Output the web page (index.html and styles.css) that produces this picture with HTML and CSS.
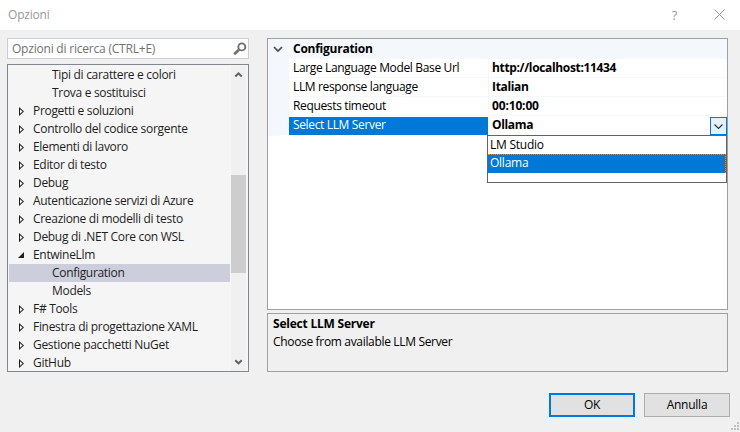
FILE: index.html
```
<!DOCTYPE html>
<html lang="it">
<head>
<meta charset="utf-8">
<title>Opzioni</title>
<link rel="stylesheet" href="styles.css">
</head>
<body>
<header class="titlebar">
  <span class="title">Opzioni</span>
  <span class="help">?</span>
  <svg class="close" width="11" height="11" viewBox="0 0 11 11"><path d="M.5.5l10 10M10.5.5l-10 10"/></svg>
</header>
<main class="content">
  <section class="left">
    <div class="search"><span>Opzioni di ricerca (CTRL+E)</span>
      <svg width="14" height="14" viewBox="0 0 14 14"><circle cx="8.8" cy="4.9" r="3.5"/><path class="handle" d="M6 7.7L1.2 12.3"/></svg>
    </div>
    <div class="tree">
      <ul class="nodes">
        <li class="child">Tipi di carattere e colori</li>
        <li class="child">Trova e sostituisci</li>
        <li class="closed">Progetti e soluzioni</li>
        <li class="closed">Controllo del codice sorgente</li>
        <li class="closed">Elementi di lavoro</li>
        <li class="closed">Editor di testo</li>
        <li class="closed">Debug</li>
        <li class="closed">Autenticazione servizi di Azure</li>
        <li class="closed">Creazione di modelli di testo</li>
        <li class="closed">Debug di .NET Core con WSL</li>
        <li class="open">EntwineLlm</li>
        <li class="child selected">Configuration</li>
        <li class="child">Models</li>
        <li class="closed">F# Tools</li>
        <li class="closed">Finestra di progettazione XAML</li>
        <li class="closed">Gestione pacchetti NuGet</li>
        <li class="closed">GitHub</li>
      </ul>
      <div class="scrollbar">
        <svg width="15" height="17" viewBox="0 0 15 17"><path d="M4.3 10.5l3.2-3.2 3.2 3.2"/></svg>
        <div class="track"><div class="thumb"></div></div>
        <svg width="15" height="17" viewBox="0 0 15 17"><path d="M4.3 6.2l3.2 3.2 3.2-3.2"/></svg>
      </div>
    </div>
  </section>
  <section class="right">
    <div class="grid">
      <div class="category"><svg width="21" height="20" viewBox="0 0 21 20"><path d="M6 8l4 4 4-4"/></svg><b>Configuration</b></div>
      <div class="row"><span class="name">Large Language Model Base Url</span><b class="value">http://localhost:11434</b></div>
      <div class="row"><span class="name">LLM response language</span><b class="value">Italian</b></div>
      <div class="row"><span class="name">Requests timeout</span><b class="value time">00:10:00</b></div>
      <div class="row active"><span class="name">Select LLM Server</span><b class="value">Ollama</b>
        <span class="drop"><svg width="15" height="16" viewBox="0 0 15 16"><path d="M3.5 6.5l4 4 4-4"/></svg></span>
      </div>
      <div class="menu"><div class="option">LM Studio</div><div class="option chosen">Ollama</div></div>
    </div>
    <div class="description"><b>Select LLM Server</b><span>Choose from available LLM Server</span></div>
  </section>
</main>
<footer class="actions">
  <button class="default">OK</button><button class="cancel">Annulla</button>
</footer>
<svg class="grip" width="8" height="8" viewBox="0 0 8 8"><path d="M6 0h2v2H6zM3 3h2v2H3zM6 3h2v2H6zM0 6h2v2H0zM3 6h2v2H3zM6 6h2v2H6z"/></svg>
</body>
</html>
```
FILE: styles.css
```
* { box-sizing: border-box; }
body {
  margin: 0; width: 740px; height: 432px; overflow: hidden; position: relative;
  background: #f0f0f0; color: #000;
  font: 12px/18px "Open Sans", "Noto Sans", sans-serif; letter-spacing: -.25px; white-space: nowrap;
}
svg { display: block; flex: none; fill: none; }
.titlebar { height: 30px; background: #fff; color: #999; display: flex; align-items: center; padding: 1px 15px 2px 8px; }
.title { flex: 1; letter-spacing: -.2px; }
.help { margin-right: 37px; font-size: 13px; }
.close { stroke: #999; }
.content { display: flex; gap: 18px; padding: 8px 12px 0 7px; height: 342px; }
.left { width: 242px; display: flex; flex-direction: column; gap: 5px; }
.search { height: 21px; border: 1px solid #cccedb; background: #fff; color: #717171; display: flex; align-items: center; justify-content: space-between; padding: 1px 1px 0 4px; letter-spacing: -.21px; }
.search svg { stroke: #717171; stroke-width: 1.9; }
.search .handle { stroke-width: 2.8; }
.tree { height: 309px; border: 1px solid #828790; background: #f5f5f5; color: #1e1e1e; display: flex; padding: 1px 2px 1px 1px; overflow: hidden; }
.nodes { list-style: none; margin: 0 1px 0 0; padding: 0; width: 221px; height: 306px; letter-spacing: -.31px; }
.nodes li { height: 18px; display: flex; align-items: center; padding-left: 24px; position: relative; }
.nodes .child { padding-left: 43px; }
.nodes .selected { background: #cccedb; }
.closed::before, .open::before { content: ""; position: absolute; left: 10px; top: 5px; width: 6px; height: 9px; background: #1e1e1e; }
.closed::before { clip-path: path(evenodd, "M0 0L5 4.5L0 9ZM1 2.2L3.6 4.5L1 6.8Z"); }
.open::before { left: 9px; top: 6px; height: 6px; clip-path: polygon(100% 0, 100% 100%, 0 100%); }
.scrollbar { width: 15px; background: #f0f0f0; display: flex; flex-direction: column; height: 305px; }
.scrollbar svg { stroke: #606060; stroke-width: 2; }
.track { flex: 1; padding-top: 92px; }
.thumb { height: 98px; background: #cdcdcd; }
.right { width: 461px; display: flex; flex-direction: column; gap: 3px; }
.grid { height: 272px; border: 1px solid #a0a0a0; background: #fff; position: relative; }
.category { height: 20px; background: #f4f7fc; display: flex; align-items: center; }
.category svg { stroke: #4b4b4b; stroke-width: 1.7; }
.category b { padding-left: 4px; }
.row { height: 19px; display: flex; border-left: 21px solid #f4f7fc; border-bottom: 1px solid #f4f7fc; line-height: 17px; }
.name { width: 200px; padding-left: 4px; border-right: 1px solid #f4f7fc; letter-spacing: -.35px; }
.value { flex: 1; padding-left: 3px; letter-spacing: -.34px; }
.time { letter-spacing: -.15px; }
.active { height: 20px; border-bottom-color: #fff; line-height: 16px; padding-top: 1px; }
.active .name { background: #0078d7; color: #fff; height: 18px; }
.drop { width: 17px; height: 18px; border: 1px solid #0078d7; background: #e5f1fb; }
.drop svg { stroke: #333; stroke-width: 1.2; }
.menu { position: absolute; left: 219px; top: 96px; width: 240px; height: 48px; background: #fff; border: 1px solid #646464; }
.option { height: 18px; padding-left: 2px; line-height: 18px; }
.chosen { height: 19px; background: #0078d7; color: #fff; border-top: 1px dotted #ff8728; border-right: 1px dotted #ff8728; line-height: 16px; }
.description { height: 59px; border: 1px solid #a0a0a0; padding: 1px 5px; display: flex; flex-direction: column; letter-spacing: -.33px; }
.description b { letter-spacing: -.22px; }
.actions { display: flex; justify-content: flex-end; gap: 9px; padding: 21px 10px 0 0; }
button { width: 86px; height: 24px; padding: 0; font: inherit; letter-spacing: inherit; color: #000; background: #e1e1e1; border: 1px solid #adadad; }
.default { border: 2px solid #0078d7; }
.grip { position: absolute; left: 731px; top: 422px; fill: #bfbfbf; }
```
